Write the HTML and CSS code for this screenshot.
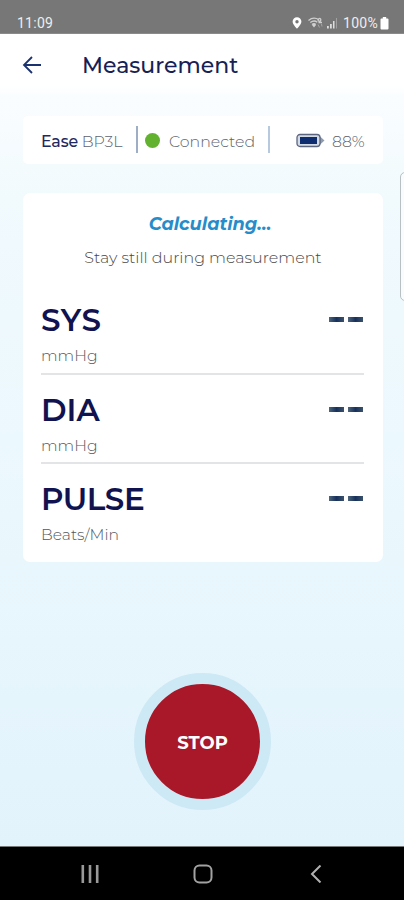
FILE: index.html
```
<!DOCTYPE html>
<html lang="en">
<head>
<meta charset="utf-8">
<title>Measurement</title>
<link rel="stylesheet" href="styles.css">
</head>
<body>
<div class="screen">
  <div class="status">
    <span class="clock">11:09</span>
    <svg class="status-icons" width="50" height="14" viewBox="0 0 50 14">
      <path fill="#fff" fill-rule="evenodd" d="M5 1.200a4.400 4.400 0 0 0-4.400 4.400C.6 8.700 5 12.700 5 12.700s4.400-4 4.400-7.100A4.400 4.400 0 0 0 5 1.200zm0 2.800a1.700 1.700 0 1 1 0 3.400 1.700 1.700 0 0 1 0-3.400z"/>
      <g fill="none" stroke="#cfcfcf" stroke-width="1.300"><path d="M16.500 4.500q5-4.200 10.500-.7M18.300 6.600q3.700-3 7-.3M20 8.500q2-1.500 3.800 0"/><path d="M26.500 2.800q2.300-1 2.300 1t-2.300 1.200q-1-1 0-2.200M26.500 6.500h3.500"/></g>
      <path fill="none" stroke="#a5a5a5" d="M26 8.500l1.500 3M29.500 8l.5 2.500"/>
      <path fill="#d2d2d2" d="M20 9l2 2.500 2-2.500-2-1.500z"/>
      <path fill="#ddd" d="M35 10h1.800v2.500H35zM38 8h1.800v4.500H38zM41 5h1.500v7.500H41z"/><path fill="#a0a0a0" d="M44 2h1v10.500h-1z"/>
    </svg>
    <span class="percent">100%</span>
    <svg width="9" height="13" viewBox="0 0 9 13"><path fill="#fff" d="M2.800 0h3.400v1.500H7.500q1 0 1 1V11.500q0 1-1 1h-6q-1 0-1-1V2.500q0-1 1-1h1.300z"/></svg>
  </div>
  <div class="header">
    <svg width="20" height="18" viewBox="0 0 20 18"><path fill="none" stroke="#1b3270" stroke-width="1.800" d="M19 9H2M10 1L2 9l8 8"/></svg>
    <span class="title">Measurement</span>
  </div>
  <div class="device">
    <span class="name"><span class="ease">Ease</span> BP3L</span>
    <span class="divider"></span>
    <span class="dot"></span>
    <span class="connected">Connected</span>
    <span class="divider second"></span>
    <svg class="battery" width="29" height="15" viewBox="0 0 29 15"><path fill="#8d9cae" d="M23 2.500L28.500 7.500 23 12.500z"/><rect x="1" y="1.500" width="23" height="12" rx="3" fill="#d5dbe5" stroke="#5b6580" stroke-width="1.300"/><rect x="4" y="4" width="17" height="7" fill="#0e2c70"/></svg>
    <span class="charge">88%</span>
  </div>
  <div class="card">
    <div class="state"><span>Calculating...</span></div>
    <div class="hint"><span>Stay still during measurement</span></div>
    <div class="row"><div><div class="label sys">SYS</div><div class="unit">mmHg</div></div><div class="dashes"><i></i><i></i></div></div>
    <div class="row"><div><div class="label dia">DIA</div><div class="unit">mmHg</div></div><div class="dashes"><i></i><i></i></div></div>
    <div class="row"><div><div class="label pulse">PULSE</div><div class="unit">Beats/Min</div></div><div class="dashes"><i></i><i></i></div></div>
  </div>
  <div class="stop"><span>STOP</span></div>
  <div class="edge"></div>
  <div class="nav">
    <svg width="18" height="18" viewBox="0 0 18 18"><path stroke="#999" stroke-width="2.600" d="M1.800 0v18M9 0v18M16.200 0v18"/></svg>
    <svg class="home" width="20" height="20" viewBox="0 0 20 20"><rect x="1.500" y="1.500" width="17" height="17" rx="5" fill="none" stroke="#a2a2a2" stroke-width="2"/></svg>
    <svg class="back" width="12" height="18" viewBox="0 0 12 18"><path fill="none" stroke="#b0b0b0" stroke-width="2" d="M10.500 .5L2 9l8.500 8.500"/></svg>
  </div>
</div>
</body>
</html>
```
FILE: styles.css
```
* { box-sizing: border-box; }
body { margin: 0; font-family: Montserrat, Inter, sans-serif; }
span, .label, .unit { white-space: nowrap; }
svg { display: block; flex: none; }
.screen {
  position: relative; width: 404px; height: 900px; overflow: hidden;
  display: flex; flex-direction: column;
  background: linear-gradient(#fafdff 95px, #f1fafd 200px, #e9f7fd 560px, #e2f3fc 847px);
}
.status {
  height: 34px; flex: none; background: #777; color: #eee;
  display: flex; align-items: center; padding: 13px 15px 0 17px;
  font: 14px/20px Roboto, sans-serif; border-bottom: 1px solid #8a8a8a;
}
.clock { letter-spacing: .25px; }
.status-icons { margin-left: auto; margin-right: 1px; }
.percent { width: 37px; letter-spacing: .3px; }
.header {
  height: 62px; flex: none; display: flex; align-items: center;
  padding-left: 22px; background: linear-gradient(#fff 52px, #fafdff);
}
.title { margin-left: 40px; font-size: 22px; font-weight: 500; color: #171f56; }
.device {
  margin: 20px 21px 0 23px; height: 48px; flex: none; border-radius: 5px; background: #fff;
  display: flex; align-items: center; padding: 2px 0 0 18px;
  font-size: 15.800px; font-weight: 300; color: #5e636e;
}
.name { width: 95px; letter-spacing: -.15px; }
.ease { color: #1f285f; font-weight: 500; }
.divider { width: 2px; height: 27px; margin-top: -3px; background: #9daec6; }
.second { background: #b7c9de; }
.dot { width: 15px; height: 15px; border-radius: 50%; background: #62b22f; margin: -1px 9px 0 7px; }
.connected { width: 99px; }
.battery { margin-left: 26px; margin-top: -1px; }
.charge { margin-left: 7px; }
.card { margin: 29px 21px 0 23px; height: 369px; flex: none; border-radius: 7px; background: #fff; padding: 18px 18px 0; }
.state { height: 26px; line-height: 26px; text-align: center; margin-left: 14px; font-size: 17.800px; font-weight: 700; font-style: italic; color: #268dca; }
.hint { height: 24px; line-height: 24px; margin-top: 9px; text-align: center; font-size: 15.900px; font-weight: 300; color: #484848; }
.row { height: 89.500px; width: 323px; display: flex; justify-content: space-between; border-bottom: 2px solid #e2e4e6; }
.hint + .row { margin-top: 15px; }
.row:last-child { border: 0; }
.label { height: 40px; line-height: 40px; margin-top: 15px; font-size: 31px; font-weight: 600; color: #10134f; }
.sys { letter-spacing: .7px; }
.pulse { letter-spacing: -.4px; }
.unit { height: 20px; line-height: 20px; margin-top: 6px; font-size: 15.600px; font-weight: 300; color: #53585e; }
.dashes { display: flex; gap: 4px; margin: 32px 1px 0 0; }
.dashes i { width: 15px; height: 5px; background: linear-gradient(90deg, #4e6579, #17305c 50%, #3a5269); }
.stop {
  width: 137px; height: 137px; flex: none; margin: 111px 0 0 134px; border-radius: 50%;
  border: 11px solid #cde9f5; background: #a81829; color: #fff;
  display: flex; align-items: center; justify-content: center; padding-top: 2px; font-size: 18px; font-weight: 700;
}
.edge { position: absolute; left: 400px; top: 172px; width: 20px; height: 129px; border: 1.500px solid #b9c0c4; border-radius: 5px; background: #f8fcfd; }
.nav {
  margin-top: auto; height: 54px; flex: none; background: #000; border-top: 1px solid #777;
  display: flex; align-items: center; padding: 0 81px;
}
.home { margin-left: 94px; }
.back { margin-left: 97px; }
```
